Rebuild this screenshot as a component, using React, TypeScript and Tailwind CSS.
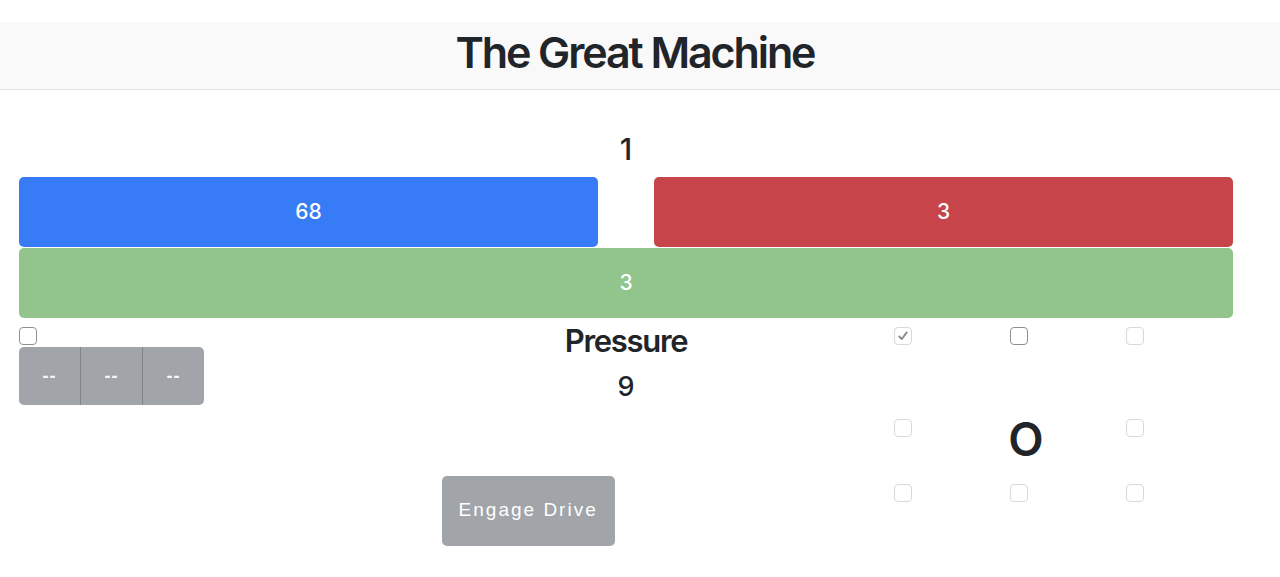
import React from "react";

function Box({ kind }: { kind: "on" | "off" | "checked" }) {
  const base = "block w-[18px] h-[18px] rounded-[4px] border bg-white";
  if (kind === "on") return <span className={`${base} border-[#8f8f8f]`} />;
  if (kind === "off") return <span className={`${base} border-[#d9d9d9]`} />;
  return (
    <span className={`${base} border-[#d9d9d9] bg-[#f7f7f7] flex items-center justify-center`}>
      <svg width="12" height="12" viewBox="0 0 12 12">
        <path d="M2.2 6.4 L4.8 9 L9.8 2.4" fill="none" stroke="#8a8a8a" strokeWidth="1.9" strokeLinecap="round" strokeLinejoin="round" />
      </svg>
    </span>
  );
}

export default function App() {
  const font = { fontFamily: "'Liberation Sans', Arial, sans-serif" };
  const inter = { fontFamily: "Inter, 'Liberation Sans', sans-serif" };
  return (
    <div className="min-h-[577px] bg-white text-[#212529]" style={font}>
      <header className="mt-[22px] h-[68px] bg-[#f9f9f9] border-b border-[#e2e2e2] flex items-center justify-center pr-[10px]">
        <h1 className="text-[43px] font-semibold tracking-[-2.1px] leading-none pb-[7px]" style={inter}>
          The Great Machine
        </h1>
      </header>
      <main className="ml-[19px] w-[1214px]">
        <div className="pt-[41px] mb-[10px] text-center text-[30px] font-medium leading-[1.2]" style={inter}>1</div>
        <div className="flex gap-[56px]">
          <div className="flex-1 h-[70px] rounded-[5px] bg-[#387bf6] text-white text-[21px] font-medium flex items-center justify-center" style={inter}>68</div>
          <div className="flex-1 h-[70px] rounded-[5px] bg-[#c8444b] text-white text-[21px] font-medium flex items-center justify-center" style={inter}>3</div>
        </div>
        <div className="mt-[1px] h-[70px] rounded-[5px] bg-[#91c58c] text-white text-[21px] font-medium flex items-center justify-center" style={inter}>3</div>
        <div className="grid grid-cols-3">
          <div className="pt-[9px]">
            <Box kind="on" />
            <div className="mt-[2px] flex w-[185px] h-[58px] rounded-[5px] overflow-hidden bg-[#a1a5a9] text-white/90 text-[18px] font-bold">
              <div className="flex-1 flex items-center justify-center border-r border-[#80858a] tracking-[1px]">--</div>
              <div className="flex-1 flex items-center justify-center border-r border-[#80858a] tracking-[1px]">--</div>
              <div className="flex-1 flex items-center justify-center tracking-[1px]">--</div>
            </div>
          </div>
          <div style={inter}>
            <div className="pt-[4px] text-center text-[31px] font-semibold tracking-[-1.3px] leading-[1.2]">Pressure</div>
            <div className="mt-[12px] text-center text-[27px] font-medium leading-[1.2]">9</div>
            <button className="mt-[72px] ml-[18px] w-[173px] h-[70px] rounded-[5px] bg-[#a1a5a9] text-white text-[19px] tracking-[2px]" style={font}>
              Engage Drive
            </button>
          </div>
          <div className="pl-[66px] grid grid-cols-[116px_116px_116px] grid-rows-[92px_65px_40px]">
            <div className="pt-[9px]"><Box kind="checked" /></div>
            <div className="pt-[9px]"><Box kind="on" /></div>
            <div className="pt-[9px]"><Box kind="off" /></div>
            <div className="pt-[9px]"><Box kind="off" /></div>
            <div className="pt-[6px] -ml-[2px] text-[46px] leading-none font-semibold" style={inter}>O</div>
            <div className="pt-[9px]"><Box kind="off" /></div>
            <div className="pt-[9px]"><Box kind="off" /></div>
            <div className="pt-[9px]"><Box kind="off" /></div>
            <div className="pt-[9px]"><Box kind="off" /></div>
          </div>
        </div>
      </main>
    </div>
  );
}
